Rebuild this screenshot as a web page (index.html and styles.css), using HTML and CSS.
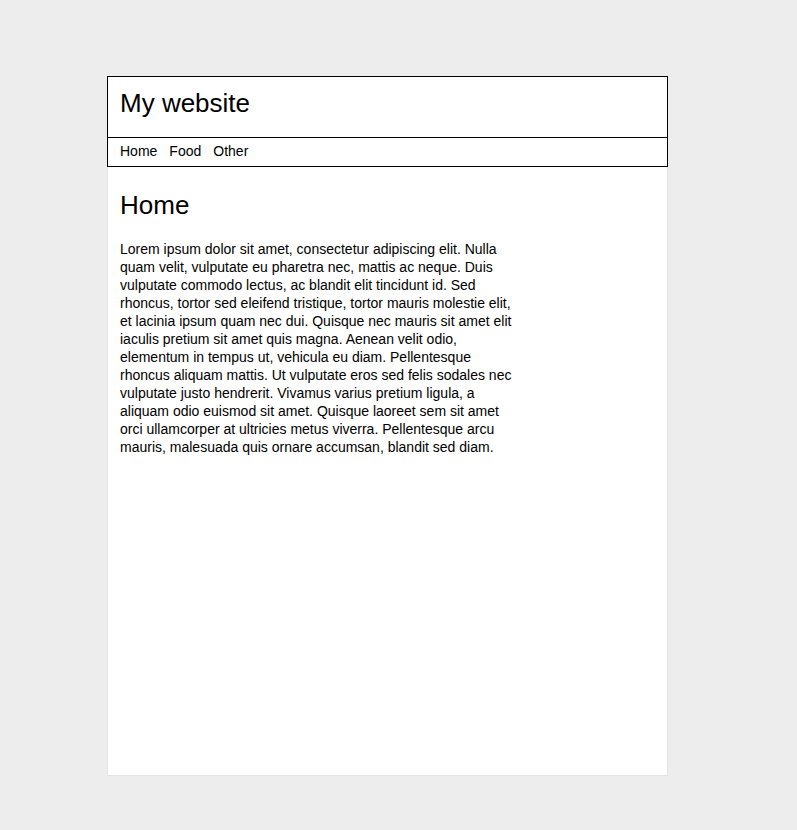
FILE: index.html
```html
<!DOCTYPE html>
<html>
<head>
<meta charset="utf-8">
<link rel="stylesheet" href="styles.css">
</head>
<body>
<div class="page">
  <header class="site-header">
    <div class="title">My website</div>
    <nav class="nav">
      <a href="#">Home</a>
      <a href="#">Food</a>
      <a href="#">Other</a>
    </nav>
  </header>
  <main class="content">
    <h1>Home</h1>
    <p>Lorem ipsum dolor sit amet, consectetur adipiscing elit. Nulla quam velit, vulputate eu pharetra nec, mattis ac neque. Duis vulputate commodo lectus, ac blandit elit tincidunt id. Sed rhoncus, tortor sed eleifend tristique, tortor mauris molestie elit, et lacinia ipsum quam nec dui. Quisque nec mauris sit amet elit iaculis pretium sit amet quis magna. Aenean velit odio, elementum in tempus ut, vehicula eu diam. Pellentesque rhoncus aliquam mattis. Ut vulputate eros sed felis sodales nec vulputate justo hendrerit. Vivamus varius pretium ligula, a aliquam odio euismod sit amet. Quisque laoreet sem sit amet orci ullamcorper at ultricies metus viverra. Pellentesque arcu mauris, malesuada quis ornare accumsan, blandit sed diam.</p>
  </main>
</div>
</body>
</html>
```
FILE: styles.css
```css
html, body {
  margin: 0;
  padding: 0;
}
body {
  background: #ededed;
  font-family: "Liberation Sans", Arial, sans-serif;
  color: #000;
  padding: 76px 0 0 107px;
}
.page {
  box-sizing: border-box;
  width: 561px;
  height: 700px;
  background: #fff;
  border: 1px solid #e3e3e3;
}
.site-header {
  margin: -1px -1px 0 -1px;
  border: 1px solid #000;
}
.title {
  font-size: 26px;
  line-height: 30px;
  padding: 11px 12px 19px 12px;
  border-bottom: 1px solid #000;
}
.nav {
  display: flex;
  gap: 12px;
  padding: 4px 12px 6px 12px;
  font-size: 14px;
  line-height: 18px;
}
.nav a {
  color: #000;
  text-decoration: none;
}
.content {
  padding: 0 12px;
}
.content h1 {
  font-size: 26px;
  font-weight: normal;
  line-height: 30px;
  margin: 23px 0 0 0;
}
.content p {
  width: 400px;
  font-size: 14px;
  line-height: 18px;
  margin: 20px 0 0 0;
}
```
